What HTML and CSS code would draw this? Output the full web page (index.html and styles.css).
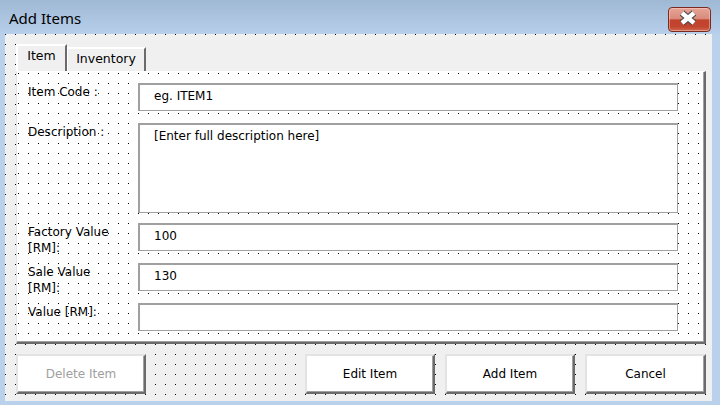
FILE: index.html
```html
<!DOCTYPE html>
<html lang="en">
<head>
<meta charset="utf-8">
<title>Add Items</title>
<link rel="stylesheet" href="styles.css">
</head>
<body>
<div class="window">
  <div class="titlebar">
    <span class="title">Add Items</span>
    <button class="close" type="button" aria-label="Close">
      <svg width="41" height="23" viewBox="0 0 41 23">
        <path d="M13 5 L25 15 M25 5 L13 15" stroke="#474747" stroke-width="6.8" fill="none"/>
        <path d="M13 5 L25 15 M25 5 L13 15" stroke="#ffffff" stroke-width="4.4" fill="none"/>
      </svg>
    </button>
  </div>
  <div class="client">
    <div class="multipage">
      <div class="tabstrip">
        <div class="tab tab-active">Item</div>
        <div class="tab">Inventory</div>
      </div>
      <div class="page">
        <div class="field">
          <span class="label">Item Code :</span>
          <div class="textbox">eg. ITEM1</div>
        </div>
        <div class="field field-desc">
          <span class="label">Description :</span>
          <div class="textbox textbox-multi">[Enter full description here]</div>
        </div>
        <div class="field">
          <span class="label">Factory Value<br>[RM]:</span>
          <div class="textbox">100</div>
        </div>
        <div class="field">
          <span class="label">Sale Value<br>[RM]:</span>
          <div class="textbox">130</div>
        </div>
        <div class="field field-last">
          <span class="label">Value [RM]:</span>
          <div class="textbox"></div>
        </div>
      </div>
    </div>
    <div class="actions">
      <div class="btn btn-disabled">Delete Item</div>
      <div class="btn-group">
        <div class="btn">Edit Item</div>
        <div class="btn">Add Item</div>
        <div class="btn btn-cancel">Cancel</div>
      </div>
    </div>
  </div>
</div>
</body>
</html>
```

FILE: styles.css
```css
* {
  box-sizing: border-box;
}

html,
body {
  margin: 0;
  padding: 0;
}

body {
  width: 720px;
  height: 405px;
  overflow: hidden;
  background: #b9d1ea;
  font-family: "DejaVu Sans", Tahoma, sans-serif;
  font-size: 12px;
  color: #000;
}

/* window frame */
.window {
  width: 720px;
  height: 405px;
  display: flex;
  flex-direction: column;
  background: #b9d1ea;
}

.titlebar {
  flex: none;
  height: 34px;
  display: flex;
  align-items: flex-start;
  background: linear-gradient(#9fb8d4, #b7cfea);
}

.title {
  flex: 1;
  margin: 8px 0 0 9px;
  font-family: "Noto Sans", "Open Sans", sans-serif;
  font-size: 15px;
  line-height: 20px;
  color: #000;
}

.close {
  flex: none;
  margin: 7px 9px 0 0;
  width: 43px;
  height: 25px;
  padding: 0;
  border: 1px solid #7c2a20;
  border-radius: 4px;
  background: linear-gradient(#e6a496 0%, #d98b7b 46%, #c3432d 52%, #c2452f 82%, #cf6a52 100%);
  box-shadow: inset 0 0 0 1px rgba(255, 220, 210, 0.45);
  display: block;
}

.close svg {
  display: block;
}

/* form client area with design grid */
.client {
  flex: 1;
  margin: 0 8px 4px 5px;
  padding: 6px 0 0 11px;
  background-color: #f0f0f0;
  background-image: url("data:image/svg+xml,%3Csvg xmlns='http://www.w3.org/2000/svg' width='10' height='10'%3E%3Crect width='1' height='1' fill='%23000'/%3E%3C/svg%3E");
  background-position: 0 0;
}

/* multipage control */
.multipage {
  width: 690px;
  height: 304px;
  display: flex;
  flex-direction: column;
  background: #f0f0f0;
}

.tabstrip {
  flex: none;
  height: 31px;
  display: flex;
  align-items: flex-end;
}

.tab {
  height: 24px;
  padding: 2px 8px 0 8px;
  border-left: 1px solid #ffffff;
  border-top: 2px solid #ffffff;
  border-right: 2px solid #6b6b6b;
  background: #f0f0f0;
  font-size: 12.5px;
  line-height: 16px;
  text-align: center;
  white-space: nowrap;
}

.tab-active {
  width: 51px;
  height: 27px;
  border-left: 2px solid #ffffff;
}

.tab:not(.tab-active) {
  width: 79px;
}

.page {
  flex: 1;
  padding: 11px 0 0 11px;
  border-left: 1px solid #e3e3e3;
  border-top: 1px solid #ffffff;
  border-right: 2px solid #6b6b6b;
  border-bottom: 2px solid #6b6b6b;
  box-shadow: inset -1px -1px 0 #a0a0a0;
  background-color: #ffffff;
  background-image: url("data:image/svg+xml,%3Csvg xmlns='http://www.w3.org/2000/svg' width='10' height='10'%3E%3Crect width='1' height='1' fill='%23000'/%3E%3C/svg%3E");
  background-position: 1px 1px;
}

/* each row is as tall as its text box; two-line labels run past it */
.field {
  display: flex;
  align-items: flex-start;
  height: 28px;
  margin-bottom: 12px;
}

.field-desc {
  height: 90px;
  margin-bottom: 10px;
}

.field-last {
  margin-bottom: 0;
}

.label {
  flex: none;
  width: 110px;
  padding-top: 1px;
  line-height: 16px;
  white-space: nowrap;
}

.textbox {
  flex: none;
  width: 540px;
  height: 28px;
  padding: 3px 0 0 14px;
  border-top: 2px solid #a0a0a0;
  border-left: 2px solid #a0a0a0;
  border-right: 1px solid #a0a0a0;
  border-bottom: 1px solid #a0a0a0;
  background: #ffffff;
  line-height: 16px;
  white-space: nowrap;
}

.textbox-multi {
  height: 90px;
}

/* command buttons */
.actions {
  width: 690px;
  margin-top: 10px;
  display: flex;
  justify-content: space-between;
}

.btn-group {
  display: flex;
  gap: 10px;
}

.btn {
  width: 130px;
  height: 40px;
  display: flex;
  align-items: center;
  justify-content: center;
  border-top: 2px solid #e3e3e3;
  border-left: 2px solid #e3e3e3;
  border-right: 2px solid #6b6b6b;
  border-bottom: 2px solid #6b6b6b;
  box-shadow: inset -1px -1px 0 #a0a0a0;
  background: #ffffff;
  line-height: 16px;
  white-space: nowrap;
}

.btn-cancel {
  width: 121px;
}

.btn-disabled {
  color: #a0a0a0;
}
```
